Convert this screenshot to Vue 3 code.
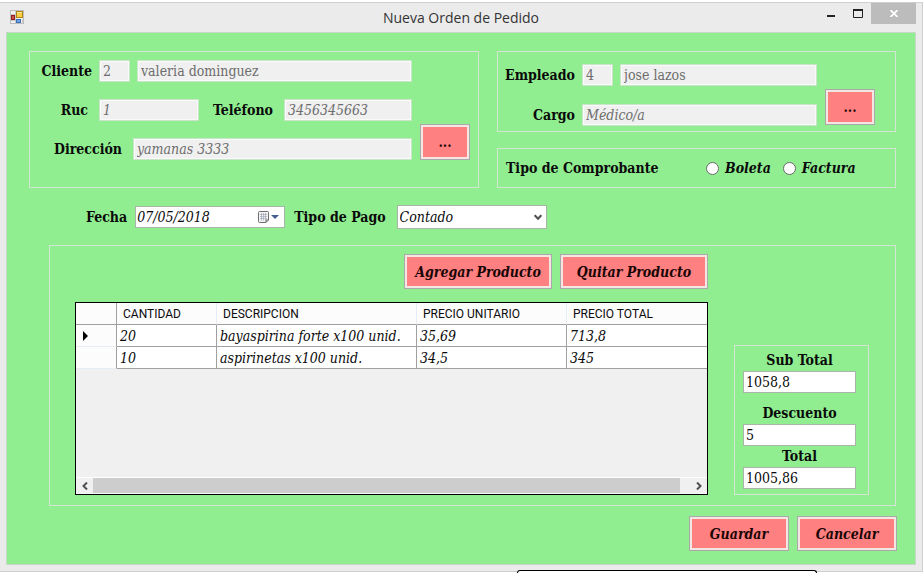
<script setup>
import { ref } from 'vue'

const client = ref({ id: '2', name: 'valeria dominguez', ruc: '1', phone: '3456345663', address: 'yamanas 3333' })
const employee = ref({ id: '4', name: 'jose lazos', role: 'Médico/a' })
const voucher = ref('')
const date = ref('07/05/2018')
const payment = ref('Contado')
const items = ref([
  { qty: '20', description: 'bayaspirina forte x100 unid.', price: '35,69', total: '713,8' },
  { qty: '10', description: 'aspirinetas x100 unid.', price: '34,5', total: '345' },
])
const subtotal = ref('1058,8')
const discount = ref('5')
const total = ref('1005,86')
</script>

<template>
  <div class="screen">
    <div class="window">
      <header class="titlebar">
        <svg class="app-icon" width="14" height="14" viewBox="0 0 14 14" aria-hidden="true">
          <rect x="0.5" y="0.5" width="13" height="13" fill="#f1f1f1" stroke="#bdbdbd" />
          <path d="M5.500 1v12M1 4.500h5M1 10.500h5M12.500 9v4" stroke="#c9c9c9" />
          <rect x="1.5" y="5.5" width="3" height="4" fill="#c9544c" stroke="#8e1f1d" />
          <rect x="6.5" y="1.5" width="6" height="6" fill="#f6cf46" stroke="#b18412" />
          <path d="M7 2.500h5" stroke="#fbe79a" />
          <rect x="6.5" y="9.5" width="4" height="3" fill="#6ea2e4" stroke="#3d6fb5" />
        </svg>
        <h1 class="title">Nueva Orden de Pedido</h1>
        <div class="controls">
          <button class="ctl" type="button" aria-label="Minimizar">
            <svg width="8" height="9" viewBox="0 0 8 9"><path d="M0 7h8" stroke="#222" stroke-width="2" /></svg>
          </button>
          <button class="ctl" type="button" aria-label="Maximizar">
            <svg width="10" height="9" viewBox="0 0 10 9"><path d="M0.500 1v7.500h9V1" fill="none" stroke="#222" /><path d="M0 1h10" stroke="#222" stroke-width="2" /></svg>
          </button>
          <button class="ctl close" type="button" aria-label="Cerrar">
            <svg width="8" height="7" viewBox="0 0 8 7"><path d="M0.500 0L7.500 7M7.500 0L0.500 7" stroke="#fff" stroke-width="1.700" /></svg>
          </button>
        </div>
      </header>

      <main class="body">
        <div class="top">
          <section class="panel client">
            <div class="fields">
              <div class="row tight">
                <label class="lbl w62" for="cid">Cliente</label>
                <input id="cid" v-model="client.id" class="box code" disabled />
                <input v-model="client.name" class="box grow" aria-label="Nombre del cliente" disabled />
              </div>
              <div class="row">
                <label class="lbl w58" for="ruc">Ruc</label>
                <input id="ruc" v-model="client.ruc" class="box w100 italic" disabled />
                <label class="lbl w63" for="tel">Teléfono</label>
                <input id="tel" v-model="client.phone" class="box grow italic" disabled />
              </div>
              <div class="row">
                <label class="lbl w92" for="dir">Dirección</label>
                <input id="dir" v-model="client.address" class="box grow italic" disabled />
              </div>
            </div>
            <button class="btn browse" type="button" aria-label="Buscar cliente">...</button>
          </section>

          <div class="side">
            <section class="panel employee">
              <div class="fields">
                <div class="row tight">
                  <label class="lbl w77" for="eid">Empleado</label>
                  <input id="eid" v-model="employee.id" class="box code" disabled />
                  <input v-model="employee.name" class="box grow" aria-label="Nombre del empleado" disabled />
                </div>
                <div class="row tight">
                  <label class="lbl w77" for="cargo">Cargo</label>
                  <input id="cargo" v-model="employee.role" class="box grow italic" disabled />
                </div>
              </div>
              <button class="btn browse" type="button" aria-label="Buscar empleado">...</button>
            </section>
            <section class="panel voucher" role="radiogroup" aria-labelledby="tc">
              <span id="tc" class="lbl voucher-title">Tipo de Comprobante</span>
              <label class="radio"><input v-model="voucher" type="radio" name="tc" value="boleta" />Boleta</label>
              <label class="radio"><input v-model="voucher" type="radio" name="tc" value="factura" />Factura</label>
            </section>
          </div>
        </div>

        <div class="middle">
          <label class="lbl" for="fecha">Fecha</label>
          <div class="date">
            <input id="fecha" v-model="date" class="plain" />
            <button class="cal" type="button" aria-label="Abrir calendario">
              <svg width="21" height="13" viewBox="0 0 21 13">
                <path d="M1.500 0.500h8a1 1 0 0 1 1 1v7.500l-2.500 2.500h-6.500a1 1 0 0 1-1-1v-9a1 1 0 0 1 1-1z" fill="#f3f3f3" stroke="#6f6f6f" />
                <path d="M2 3.500h7M2 5.500h7M2 7.500h7M3.500 2v7.500M5.500 2v7.500M7.500 2v7.500" stroke="#a3a9bd" stroke-width="0.700" />
                <path d="M8 11.500V9h2.500" fill="none" stroke="#6f6f6f" />
                <path d="M13 4h8l-4 4z" fill="#45608f" />
              </svg>
            </button>
          </div>
          <label class="lbl pay" for="pago">Tipo de Pago</label>
          <div class="combo">
            <select id="pago" v-model="payment">
              <option>Contado</option>
            </select>
            <svg width="8" height="7" viewBox="0 0 8 7" aria-hidden="true"><path d="M0.700 1.200L4 4.700L7.300 1.200" fill="none" stroke="#4f4f4f" stroke-width="2" /></svg>
          </div>
        </div>

        <section class="panel detail">
          <div class="products">
            <div class="actions">
              <button class="btn wide" type="button">Agregar Producto</button>
              <button class="btn wide" type="button">Quitar Producto</button>
            </div>
            <div class="grid">
              <table>
                <colgroup>
                  <col class="c-mark" /><col class="c-qty" /><col class="c-desc" /><col class="c-price" /><col />
                </colgroup>
                <thead>
                  <tr>
                    <th></th>
                    <th>CANTIDAD</th>
                    <th>DESCRIPCION</th>
                    <th>PRECIO UNITARIO</th>
                    <th>PRECIO TOTAL</th>
                  </tr>
                </thead>
                <tbody>
                  <tr v-for="(item, i) in items" :key="item.description">
                    <td class="mark">
                      <svg v-if="i === 0" width="5" height="10" viewBox="0 0 5 10"><path d="M0 0l5 5l-5 5z" fill="#000" /></svg>
                    </td>
                    <td>{{ item.qty }}</td>
                    <td>{{ item.description }}</td>
                    <td>{{ item.price }}</td>
                    <td>{{ item.total }}</td>
                  </tr>
                </tbody>
              </table>
              <div class="scroll">
                <button type="button" aria-label="Desplazar a la izquierda">
                  <svg width="6" height="8" viewBox="0 0 6 8"><path d="M5 0.500L1.500 4L5 7.500" fill="none" stroke="#505050" stroke-width="2" /></svg>
                </button>
                <div class="thumb"></div>
                <button class="fwd" type="button" aria-label="Desplazar a la derecha">
                  <svg width="6" height="8" viewBox="0 0 6 8"><path d="M1 0.500L4.500 4L1 7.500" fill="none" stroke="#505050" stroke-width="2" /></svg>
                </button>
              </div>
            </div>
          </div>

          <div class="panel totals">
            <label class="lbl" for="sub">Sub Total</label>
            <input id="sub" v-model="subtotal" class="box live" />
            <label class="lbl spaced" for="desc">Descuento</label>
            <input id="desc" v-model="discount" class="box live" />
            <label class="lbl" for="tot">Total</label>
            <input id="tot" v-model="total" class="box live" />
          </div>
        </section>

        <footer class="footer">
          <button class="btn action" type="button">Guardar</button>
          <button class="btn action" type="button">Cancelar</button>
        </footer>
      </main>
    </div>
    <div class="behind"></div>
  </div>
</template>

<style>
body {
  background: #fff;
}
</style>

<style scoped>
* {
  box-sizing: border-box;
}
.screen {
  position: relative;
  overflow: hidden;
  padding: 2px 1px 1px 0;
  font-family: "DejaVu Serif Condensed", "DejaVu Serif", serif;
  font-size: 14px;
  color: #0a0a0a;
}
.window {
  background: #ebebeb;
  border: 1px solid #cfcfcf;
  border-left: 0;
  padding: 0 6px 6px 6px;
}
.titlebar {
  display: grid;
  grid-template-columns: 1fr auto 1fr;
  align-items: start;
  height: 29px;
}
.app-icon {
  margin: 7px 0 0 4px;
}
.title {
  margin: 4px 0 0;
  font: 400 14px/22px "Open Sans", "Noto Sans", sans-serif;
  color: #333;
}
.controls {
  display: flex;
  justify-content: flex-end;
}
.ctl {
  display: flex;
  justify-content: center;
  width: 27px;
  height: 21px;
  padding: 6px 0 0;
  border: 0;
  background: transparent;
}
.close {
  width: 45px;
  padding-top: 7px;
  background: #bcbcbc;
}
.body {
  border: 1px solid #c8d8c8;
  background: #90ee90;
  padding: 18px 19px 13px 22px;
}
.panel {
  border: 1px solid #d3e6d3;
}
.top {
  display: grid;
  grid-template-columns: minmax(0, 450fr) minmax(0, 399fr);
  gap: 18px;
}
.client,
.employee {
  display: flex;
  gap: 8px;
}
.client {
  height: 137px;
  padding: 8px 8px 0 0;
}
.employee {
  height: 81px;
  padding: 12px 20px 0 0;
}
.fields {
  display: flex;
  flex: 1;
  flex-direction: column;
  gap: 18px;
  min-width: 0;
}
.client .fields {
  gap: 17px;
}
.row {
  display: flex;
  align-items: center;
  gap: 11px;
}
.tight {
  gap: 7px;
}
.lbl {
  flex-shrink: 0;
  font-weight: 700;
  line-height: 20px;
  text-align: right;
  white-space: nowrap;
}
.w58 {
  width: 58px;
}
.w62 {
  width: 62px;
}
.w63 {
  width: 63px;
}
.w77 {
  width: 77px;
}
.w92 {
  width: 92px;
}
.w100 {
  width: 100px;
}
.box {
  height: 22px;
  min-width: 0;
  margin: 0;
  padding: 0 2px;
  border: 2px solid #f8fbf8;
  outline: 1px solid #c9e4c9;
  outline-offset: -1px;
  background: #f0f0f0;
  color: #6d6d6d;
  font: inherit;
}
.code {
  width: 31px;
}
.grow {
  flex: 1;
}
.italic {
  font-style: italic;
}
.btn {
  flex-shrink: 0;
  padding: 0;
  border: 1px solid #a9a9a9;
  box-shadow: inset 0 0 0 2px #f3e6e3;
  background: #ff8080;
  color: #1a0505;
  font: italic 700 14px/20px "DejaVu Serif Condensed", "DejaVu Serif", serif;
  white-space: nowrap;
}
.browse {
  width: 50px;
  height: 36px;
  font-style: normal;
}
.client .browse {
  margin-top: 64px;
}
.employee .browse {
  margin-top: 25px;
}
.side {
  display: flex;
  flex-direction: column;
  justify-content: space-between;
}
.voucher {
  display: flex;
  align-items: center;
  gap: 12px;
  height: 40px;
  padding: 0 8px;
}
.voucher-title {
  width: 188px;
  text-align: left;
}
.radio {
  display: flex;
  align-items: center;
  gap: 6px;
  font-style: italic;
  font-weight: 700;
}
.radio input {
  appearance: none;
  width: 13px;
  height: 13px;
  margin: 0;
  border: 1px solid #6a6a6a;
  border-radius: 50%;
  background: #fff;
}
.radio input:checked {
  box-shadow: inset 0 0 0 3px #fff;
  background: #222;
}
.middle {
  display: flex;
  align-items: center;
  gap: 8px;
  padding: 17px 0 16px 57px;
}
.pay {
  margin: 0 3px 0 1px;
}
.date {
  display: flex;
  align-items: center;
  width: 150px;
  height: 22px;
  border: 1px solid #a9b5a9;
  background: #fff;
}
.plain {
  flex: 1;
  min-width: 0;
  padding: 0 1px;
  border: 0;
  background: transparent;
  color: #0a0a0a;
  font: inherit;
  font-style: italic;
}
.cal {
  display: flex;
  padding: 0 5px;
  border: 0;
  background: transparent;
}
.combo {
  display: grid;
  align-items: center;
  width: 150px;
  height: 24px;
  border: 1px solid #a9b5a9;
  background: #fff;
}
.combo select,
.combo svg {
  grid-area: 1 / 1;
}
.combo select {
  appearance: none;
  height: 22px;
  padding: 0 2px;
  border: 0;
  background: transparent;
  color: #0a0a0a;
  font: inherit;
  font-style: italic;
}
.combo svg {
  justify-self: end;
  margin-right: 4px;
  pointer-events: none;
}
.detail {
  display: flex;
  align-items: flex-end;
  gap: 26px;
  margin-left: 20px;
  padding: 8px 26px 10px 25px;
}
.products {
  flex: 1;
  min-width: 0;
}
.actions {
  display: flex;
  justify-content: flex-end;
  gap: 8px;
  margin-bottom: 13px;
}
.wide {
  width: 148px;
  height: 35px;
}
.grid {
  display: flex;
  flex-direction: column;
  justify-content: space-between;
  height: 193px;
  border: 1px solid #000;
  background: #f0f0f0;
}
table {
  width: 100%;
  table-layout: fixed;
  border-collapse: separate;
  border-spacing: 0;
}
.c-mark {
  width: 41px;
}
.c-qty {
  width: 100px;
}
.c-desc {
  width: 200px;
}
.c-price {
  width: 150px;
}
th {
  height: 21px;
  padding: 1px 6px 0;
  border-right: 1px solid #e6ecf4;
  border-bottom: 1px solid #a0a0a0;
  background: #fcfcfd;
  font: 400 12px/20px Roboto, "Liberation Sans", sans-serif;
  text-align: left;
  white-space: nowrap;
}
th:first-child {
  border-right-color: #a0a0a0;
}
td {
  height: 22px;
  padding: 0 3px;
  border-right: 1px solid #a0a0a0;
  border-bottom: 1px solid #a0a0a0;
  background: #fff;
  font-style: italic;
  line-height: 20px;
  white-space: nowrap;
}
th:last-child,
td:last-child {
  border-right: 0;
}
.mark {
  padding: 0 7px;
  border-bottom-color: #e6ecf4;
  background: #fcfcfd;
}
.mark svg {
  display: block;
}
.scroll {
  display: flex;
  height: 17px;
  border-top: 1px solid #fff;
  border-bottom: 1px solid #f8f8f8;
}
.scroll button {
  display: flex;
  align-items: center;
  justify-content: center;
  width: 17px;
  padding: 0;
  border: 0;
  background: transparent;
}
.scroll .fwd {
  margin-left: auto;
}
.thumb {
  width: 93%;
  background: #cdcdcd;
}
.totals {
  display: flex;
  flex-direction: column;
  width: 135px;
  padding: 4px 12px 5px 8px;
}
.totals .lbl {
  padding-bottom: 1px;
  text-align: center;
}
.totals .spaced {
  margin-top: 10px;
}
.live {
  border: 1px solid #a9b5a9;
  outline: 0;
  background: #fff;
  color: #0a0a0a;
}
.footer {
  display: flex;
  justify-content: flex-end;
  gap: 8px;
  margin-right: -1px;
  padding-top: 10px;
}
.action {
  width: 100px;
  height: 35px;
}
.behind {
  position: absolute;
  bottom: 0;
  left: 56%;
  width: 300px;
  height: 3px;
  border: 1px solid #000;
  border-bottom: 0;
  border-radius: 4px 4px 0 0;
  background: #fff;
}
</style>
